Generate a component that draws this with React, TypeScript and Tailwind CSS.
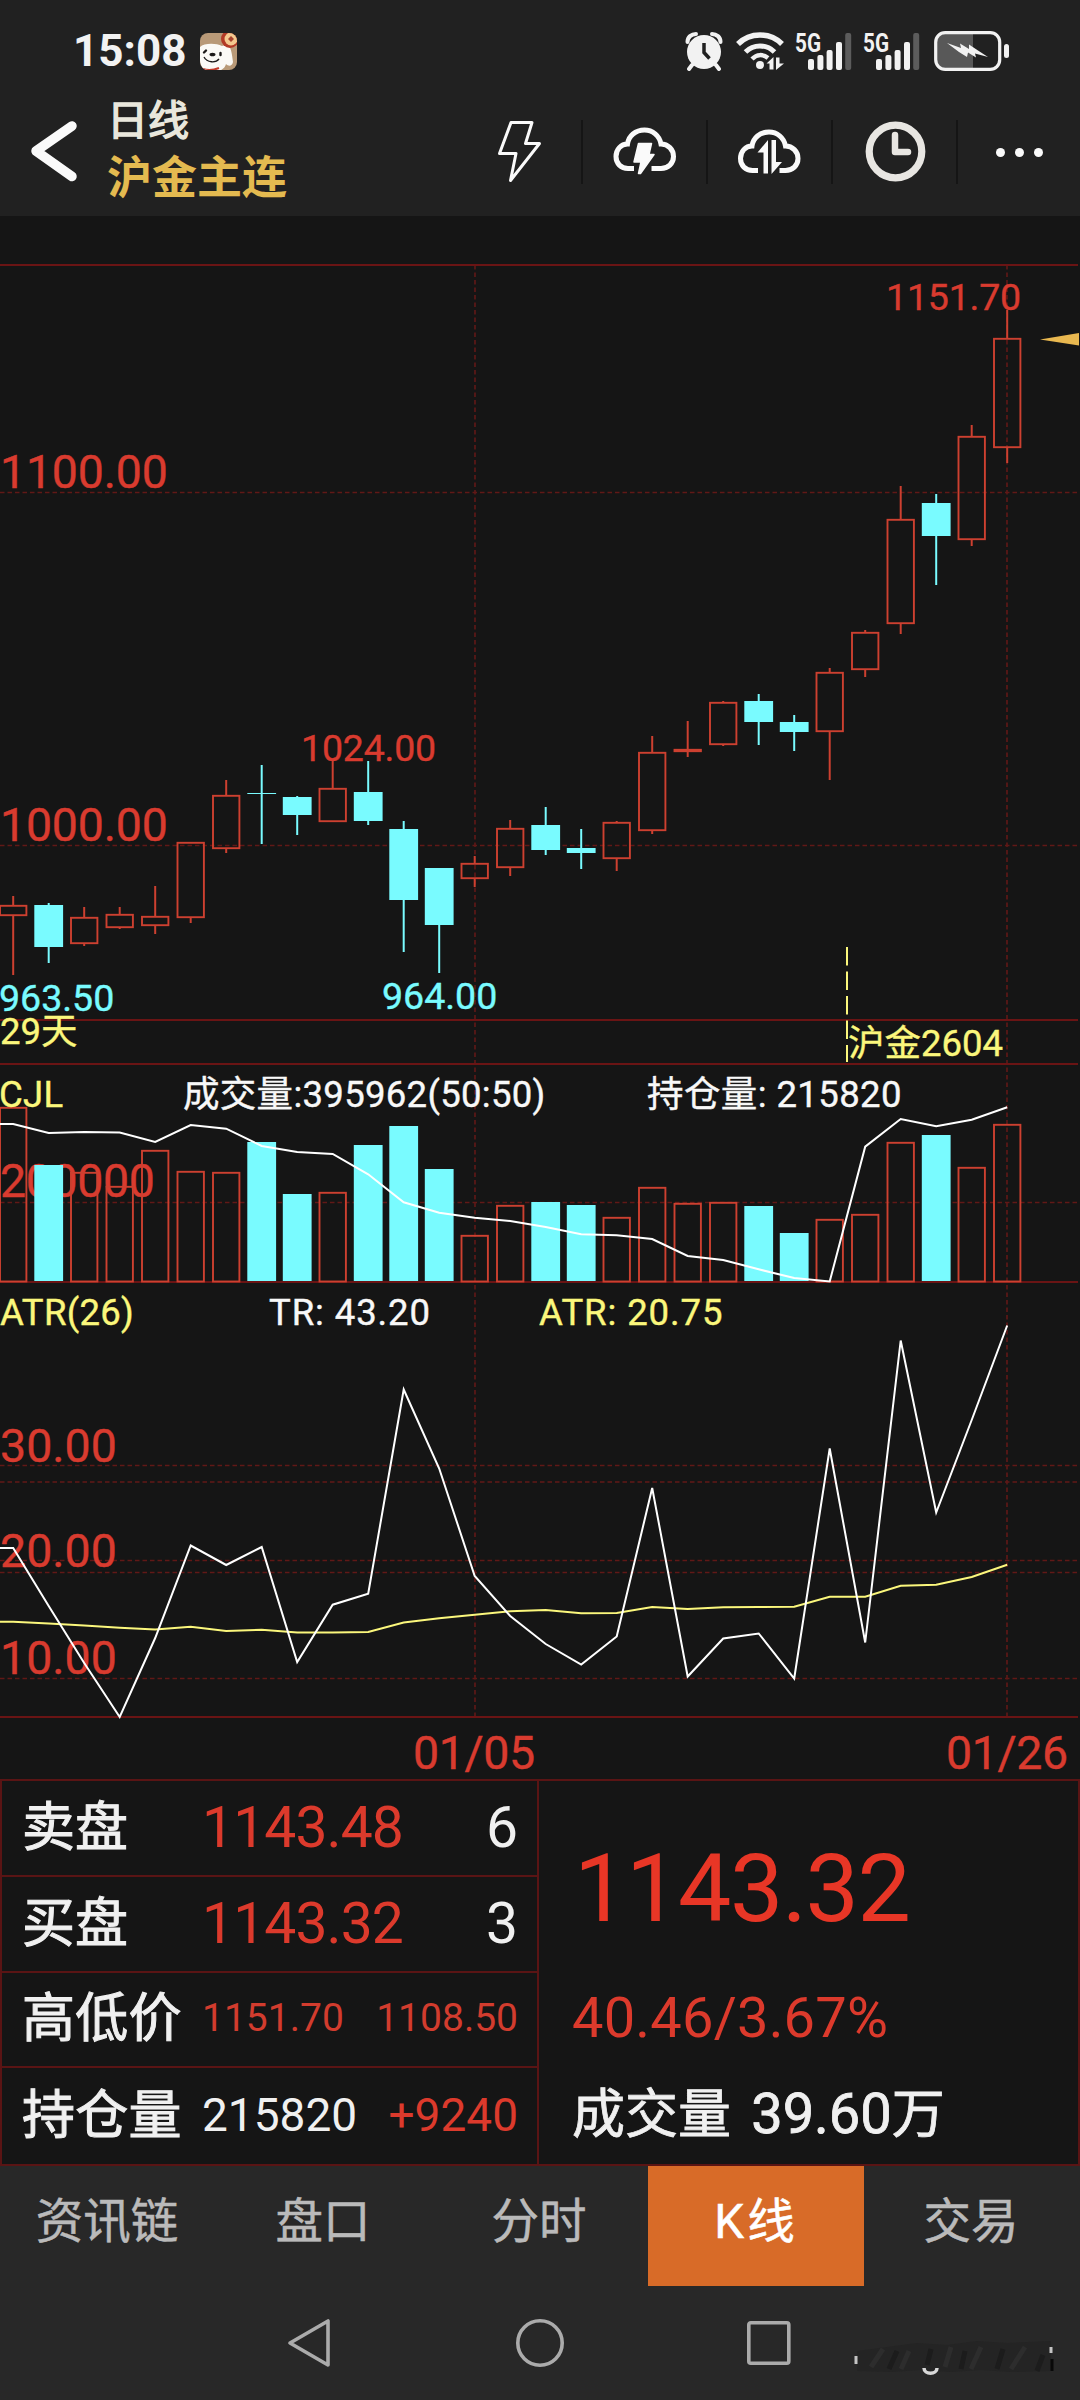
import React from 'react';

type Candle = {
  up: boolean;
  high: number;
  top: number;
  bottom: number;
  low: number;
  volume: number;
};

const RED = '#cd4030';
const LABEL_RED = '#d93b2f';
const CYAN = '#79fbff';
const YELLOW = '#fbf77c';
const GRID = '#611817';
const BORDER = '#6a1414';

const STEP = 35.5;
const BODY = 28;
const BASELINE = 1281.5;

const centerOf = (i: number) => 13.2 + i * STEP;

const candles: Candle[] = [
  { up: true, high: 896, top: 905, bottom: 916, low: 975, volume: 1107 },
  { up: false, high: 903, top: 905, bottom: 947, low: 963, volume: 1165 },
  { up: true, high: 907, top: 917, bottom: 944, low: 946, volume: 1172 },
  { up: true, high: 907, top: 914, bottom: 928, low: 929, volume: 1186 },
  { up: true, high: 886, top: 916, bottom: 926, low: 934, volume: 1150 },
  { up: true, high: 842, top: 842, bottom: 918, low: 923, volume: 1171 },
  { up: true, high: 780, top: 795, bottom: 849, low: 853, volume: 1172 },
  { up: false, high: 765, top: 793, bottom: 794, low: 844, volume: 1142 },
  { up: false, high: 796, top: 797, bottom: 815, low: 835, volume: 1194 },
  { up: true, high: 761, top: 788, bottom: 822, low: 822, volume: 1192 },
  { up: false, high: 761, top: 792, bottom: 821, low: 825, volume: 1145 },
  { up: false, high: 821, top: 829, bottom: 900, low: 952, volume: 1126 },
  { up: false, high: 868, top: 868, bottom: 925, low: 973, volume: 1169 },
  { up: true, high: 856, top: 863, bottom: 879, low: 887, volume: 1235 },
  { up: true, high: 820, top: 828, bottom: 868, low: 876, volume: 1205 },
  { up: false, high: 807, top: 825, bottom: 850, low: 855, volume: 1202 },
  { up: false, high: 829, top: 848, bottom: 853, low: 869, volume: 1205 },
  { up: true, high: 821, top: 822, bottom: 859, low: 871, volume: 1217 },
  { up: true, high: 736, top: 752, bottom: 831, low: 834, volume: 1187 },
  { up: true, high: 721, top: 749, bottom: 752, low: 757, volume: 1203 },
  { up: true, high: 701, top: 702, bottom: 745, low: 746, volume: 1202 },
  { up: false, high: 694, top: 701, bottom: 722, low: 745, volume: 1206 },
  { up: false, high: 715, top: 722, bottom: 732, low: 751, volume: 1233 },
  { up: true, high: 668, top: 672, bottom: 732, low: 780, volume: 1219 },
  { up: true, high: 630, top: 632, bottom: 670, low: 677, volume: 1214 },
  { up: true, high: 486, top: 519, bottom: 624, low: 634, volume: 1142 },
  { up: false, high: 494, top: 503, bottom: 536, low: 585, volume: 1135 },
  { up: true, high: 425, top: 436, bottom: 540, low: 546, volume: 1167 },
  { up: true, high: 310, top: 338, bottom: 448, low: 463, volume: 1124 },
];

const openInterest = [
  1124, 1133, 1132, 1132.5, 1142, 1125, 1128.7, 1146, 1152, 1154, 1174.3, 1202.3, 1212.7, 1217.7, 1221,
  1227, 1234.3, 1235.3, 1239, 1256, 1260, 1269.3, 1278, 1281.5, 1146.7, 1119, 1126.3, 1119.7, 1107.3,
];

const trueRange = [
  1548, 1606, 1663, 1717, 1638, 1545.5, 1565, 1547, 1662, 1604.7, 1593.7, 1389.5, 1468.5, 1576, 1616,
  1644, 1664.5, 1636.5, 1488, 1676.5, 1638.5, 1633.5, 1678.5, 1448.5, 1642.5, 1340.5, 1512.5, 1420, 1325.5,
];

const averageRange = [
  1621.7, 1623.5, 1625.5, 1627.7, 1629.5, 1626.7, 1631, 1629.7, 1632.5, 1632.5, 1632, 1622.5, 1618.3, 1614.7,
  1611.3, 1610, 1613.3, 1613, 1607, 1609, 1607.3, 1607, 1606.7, 1596.7, 1596.7, 1585.7, 1584.7, 1577, 1564.7,
];

const toPoints = (values: number[]) =>
  [`0,${values[0]}`, ...values.map((y, i) => `${centerOf(i)},${y}`)].join(' ');

const tabs = ['资讯链', '盘口', '分时', 'K线', '交易'];

function SignalIcon() {
  return (
    <svg className="-mt-[6px]" width="57" height="46" viewBox="0 -6 57 46">
      <text x="0" y="20.500" fontSize="26" fontWeight="700" textLength="26" lengthAdjust="spacingAndGlyphs" fill="#f2f2f2">
        5G
      </text>
      <rect x="13" y="28" width="6" height="11" rx="2" fill="#f2f2f2" />
      <rect x="22.400" y="24" width="6" height="15" rx="2" fill="#f2f2f2" />
      <rect x="31.600" y="19" width="6" height="20" rx="2" fill="#f2f2f2" />
      <rect x="41" y="11" width="6" height="28" rx="2" fill="#f2f2f2" />
      <rect x="50.200" y="2" width="6" height="37" rx="2" fill="#5c5c5c" />
    </svg>
  );
}

function StatusBar() {
  return (
    <div className="flex h-[84px] items-start pt-[31px] pl-[73px] text-[#f2f2f2]">
      <span className="text-[44px] leading-[40px] font-bold">15:08</span>
      <svg className="mt-[2px] ml-[14px] shrink-0" width="38" height="38" viewBox="0 0 38 38">
        <clipPath id="appIcon">
          <rect x="0" y="0" width="37" height="37" rx="8" />
        </clipPath>
        <g clipPath="url(#appIcon)">
          <rect width="38" height="38" fill="#b99a78" />
          <path d="M0 14c4-4 16-4 22-1l5-2c4 2 5 10 6 18-1 5-5 4-7 2-1 5-7 8-13 8-8 0-13-5-13-12z" fill="#fbfaf6" />
          <circle cx="30" cy="6" r="9" fill="#b23a26" />
          <circle cx="31" cy="6" r="6.500" fill="#f4c98f" />
          <path d="M31 3l3 3-3 3-3-3z" fill="#a8432c" />
          <path d="M3 36c6 2 11 1 16-1" stroke="#c33b2b" strokeWidth="2" fill="none" />
          <ellipse cx="12.500" cy="21.500" rx="3" ry="1.800" fill="#1c1a19" />
          <path d="M4 19.500l2-2M20.500 22v-2" stroke="#1c1a19" strokeWidth="2.400" strokeLinecap="round" />
          <path d="M4 24c3 6 12 6 15 2" stroke="#1c1a19" strokeWidth="1.300" fill="none" />
        </g>
      </svg>
      <div className="ml-[447px] flex h-[40px] items-start">
        {/* alarm */}
        <svg width="38" height="40" viewBox="0 0 38 40">
          <circle cx="19" cy="21" r="17" fill="#f2f2f2" />
          <path d="M2.500 11c0-5 4-8 8.500-8M35.500 11c0-5-4-8-8.500-8" stroke="#f2f2f2" strokeWidth="4" fill="none" strokeLinecap="round" />
          <path d="M7 34l-3 4M31 34l3 4" stroke="#f2f2f2" strokeWidth="4" strokeLinecap="round" />
          <path d="M19 12v9.500l5.500 6" stroke="#212121" strokeWidth="3.500" fill="none" />
        </svg>
        {/* wifi */}
        <svg className="ml-[13px]" width="50" height="40" viewBox="0 0 50 40">
          <g stroke="#f2f2f2" fill="none" strokeLinecap="butt">
            <path d="M2 13c12-12 32-12 44 0" strokeWidth="5.500" />
            <path d="M9.500 21c8-8 21-8 29 0" strokeWidth="5" />
            <path d="M16 28c5-5 11-5 16-1" strokeWidth="4.500" />
          </g>
          <circle cx="24" cy="34" r="4" fill="#f2f2f2" />
          <path d="M37.500 38.500h-4v-6h-3l7-6.500zM40 26.500h3.500v6h4.500l-8 6.500z" fill="#f2f2f2" />
        </svg>
        <div className="ml-[9px] flex items-start gap-[11px]">
          <SignalIcon />
          <SignalIcon />
        </div>
        {/* battery */}
        <svg className="ml-[14px]" width="77" height="40" viewBox="0 0 77 40">
          <path d="M10 3h29v34H10a7 7 0 0 1-7-7V10a7 7 0 0 1 7-7z" fill="#585858" />
          <rect x="1.700" y="1.700" width="64" height="36.600" rx="9.500" stroke="#f2f2f2" strokeWidth="3.200" fill="none" />
          <path d="M13 12l14 5-1-4.500 9 5.500 0-4.500 9 6 10 6.500-13-3.500 1 4-8-5-1 4.500-8-5z" fill="#f2f2f2" />
          <rect x="70" y="13" width="5" height="14" rx="2.500" fill="#f2f2f2" />
        </svg>
      </div>
    </div>
  );
}

function TitleBar() {
  return (
    <div className="flex h-[132px]">
      <svg className="mt-[34px] ml-[28px]" width="52" height="66" viewBox="28 118 52 66">
        <path d="M72 126L36 151l36 25.500" stroke="#fafafa" strokeWidth="9.500" strokeLinecap="round" strokeLinejoin="round" fill="none" />
      </svg>
      <div className="ml-[27px] flex w-[350px] flex-col pt-[15px] whitespace-nowrap">
        <span className="text-[41px] leading-[44px] text-[#e9e7dc] [-webkit-text-stroke:1.5px]">日线</span>
        <span className="mt-[11px] text-[45px] leading-[50px] font-bold text-[#e4ba50]">沪金主连</span>
      </div>
      <div className="mt-[36px] flex h-[64px]">
        <div className="w-[126px] border-r-2 border-[#151515]">
          <svg className="ml-[36px]" width="50" height="64" viewBox="494 120 50 64">
            <path d="M512 122.500h21l-6.500 21h14l-29 37 5.500-27h-16.500z" stroke="#fafafa" strokeWidth="3" strokeLinejoin="round" fill="none" />
          </svg>
        </div>
        <div className="w-[125px] border-r-2 border-[#151515]">
          <svg className="ml-[26px]" width="70" height="64" viewBox="609 120 70 64">
            <path
              d="M634 168.500h-6c-7 0-12-5-12-12s5-12.500 11.500-12.500c1-8 8-14 17-14 8 0 15 5.500 16.500 14 7 0 12.500 5.500 12.500 12.500s-5.500 12-12.500 12h-9.500"
              stroke="#fafafa"
              strokeWidth="5"
              fill="none"
            />
            <path d="M638.500 143.500h13l-2.500 11h5l-13.500 19h-2l2.500-11.500h-7z" fill="#fafafa" stroke="#fafafa" strokeWidth="1.500" strokeLinejoin="round" />
          </svg>
        </div>
        <div className="w-[125px] border-r-2 border-[#151515]">
          <svg className="ml-[26px]" width="70" height="64" viewBox="734 120 70 64">
            <path
              d="M758 170.500h-5.500c-7 0-12-5-12-12s5-12.500 11.500-12.500c1-8 8-14 17-14 8 0 15 5.500 16.500 14 7 0 12.500 5.500 12.500 12.500s-5.500 12-12.500 12h-6"
              stroke="#fafafa"
              strokeWidth="5"
              fill="none"
            />
            <path d="M768 140v33.500h-4.500v-21h-6zM771.500 140h4.500v22h6l-10.500 12z" fill="#fafafa" />
          </svg>
        </div>
        <div className="w-[125px] border-r-2 border-[#151515]">
          <svg className="ml-[30px]" width="66" height="64" viewBox="863 120 66 64">
            <circle cx="895.500" cy="151.500" r="26.300" stroke="#e8e6e2" strokeWidth="7.200" fill="none" />
            <path d="M895 135v17h13" stroke="#e8e6e2" strokeWidth="6.500" strokeLinecap="round" strokeLinejoin="round" fill="none" />
          </svg>
        </div>
        <div className="flex items-center gap-[10px] pl-[38px]">
          <span className="size-[9px] rounded-full bg-[#fafafa]" />
          <span className="size-[9px] rounded-full bg-[#fafafa]" />
          <span className="size-[9px] rounded-full bg-[#fafafa]" />
        </div>
      </div>
    </div>
  );
}

interface LabelProps {
  x: number;
  y: number;
  size?: number;
  fill?: string;
  spacing?: number;
  children: React.ReactNode;
}

function Label({ x, y, size = 37, fill = LABEL_RED, spacing = 0, children }: LabelProps) {
  return (
    <text x={x} y={y} fontSize={size} fill={fill} letterSpacing={spacing} stroke={fill} strokeWidth="0.400">
      {children}
    </text>
  );
}

function Chart() {
  return (
    <svg className="block" width="1080" height="1563" viewBox="0 216 1080 1563">
      {/* grid */}
      <g stroke={GRID} strokeWidth="1.600" strokeDasharray="4.500 3">
        {[492.5, 845.5, 1202.5, 1465.5, 1482, 1560.5, 1572.5, 1678.5].map((y) => (
          <line key={y} x1="0" x2="1080" y1={y} y2={y} />
        ))}
        <line x1="475" x2="475" y1="265" y2="1717" />
        <line x1="1007" x2="1007" y1="265" y2="1717" />
      </g>
      <g stroke={BORDER} strokeWidth="2">
        {[265, 1020, 1064, 1282, 1717].map((y) => (
          <line key={y} x1="0" x2="1078" y1={y} y2={y} />
        ))}
      </g>

      {/* axis labels sit under the bars */}
      <Label x={0} y={488} size={46.500} spacing={-0.2}>1100.00</Label>
      <Label x={0} y={841} size={46.500} spacing={-0.2}>1000.00</Label>
      <Label x={0} y={1197} size={46.500} spacing={-0.4}>200000</Label>
      <Label x={0} y={1462} size={46.500}>30.00</Label>
      <Label x={0} y={1567} size={46.500}>20.00</Label>
      <Label x={0} y={1674} size={46.500}>10.00</Label>
      <Label x={413} y={1769} size={46.500} spacing={-0.4}>01/05</Label>
      <Label x={946} y={1769} size={46.500} spacing={-0.4}>01/26</Label>

      <Label x={886} y={309.500} size={37.500} spacing={-0.2}>1151.70</Label>
      <Label x={301} y={760.500} size={37.500} spacing={-0.2}>1024.00</Label>
      <Label x={-1} y={1010.500} size={37.500} fill={CYAN}>963.50</Label>
      <Label x={382} y={1009} size={37.500} fill={CYAN}>964.00</Label>
      <Label x={0} y={1043.500} size={36.500} fill={YELLOW}>29天</Label>

      {candles.map((c, i) => {
        const x = centerOf(i);
        const left = x - BODY / 2;
        return (
          <g key={i}>
            <line x1={x} x2={x} y1={c.high} y2={c.top} stroke={c.up ? RED : CYAN} strokeWidth="2" />
            <line x1={x} x2={x} y1={c.bottom} y2={c.low} stroke={c.up ? RED : CYAN} strokeWidth="2" />
            {c.up ? (
              <>
                <rect x={left + 0.8} y={c.top + 0.8} width={BODY - 1.6} height={c.bottom - c.top - 1.6} stroke={RED} strokeWidth="1.900" fill="none" />
                <rect x={left + 0.8} y={c.volume + 0.8} width={BODY - 1.6} height={BASELINE - c.volume - 0.8} stroke={RED} strokeWidth="1.900" fill="none" />
              </>
            ) : (
              <>
                <rect x={left - 0.4} y={c.top} width={BODY + 0.8} height={c.bottom - c.top} fill={CYAN} />
                <rect x={left - 0.4} y={c.volume} width={BODY + 0.8} height={BASELINE - c.volume - 0.5} fill={CYAN} />
              </>
            )}
          </g>
        );
      })}

      {/* last price marker */}
      <path d="M1040 339.500L1079 333v12.500z" fill="#e9b850" />

      {/* contract rollover */}
      <line x1="847" x2="847" y1="947" y2="1062" stroke={YELLOW} strokeWidth="2" strokeDasharray="18.500 6" />
      <Label x={848} y={1056} size={36.500} fill={YELLOW}>沪金2604</Label>

      <Label x={-1} y={1106.500} size={36.500} fill={YELLOW} spacing={0.3}>CJL</Label>
      <Label x={183} y={1106.500} size={36.500} fill="#f8f8f8" spacing={0.3}>成交量:395962(50:50)</Label>
      <Label x={647} y={1106.500} size={36.500} fill="#f8f8f8" spacing={0.4}>持仓量: 215820</Label>
      <Label x={0} y={1324.500} size={36.500} fill={YELLOW} spacing={0.3}>ATR(26)</Label>
      <Label x={269} y={1324.500} size={36.500} fill="#f8f8f8" spacing={0.9}>TR: 43.20</Label>
      <Label x={539} y={1324.500} size={36.500} fill={YELLOW} spacing={0.9}>ATR: 20.75</Label>

      <g fill="none" strokeWidth="2">
        <polyline points={toPoints(openInterest)} stroke="#ffffff" />
        <polyline points={toPoints(averageRange)} stroke={YELLOW} />
        <polyline points={toPoints(trueRange)} stroke="#ffffff" />
      </g>
    </svg>
  );
}

function QuotePanel() {
  return (
    <div className="flex h-[387px] border-2 border-[#5a1414] whitespace-nowrap text-[#f0f0f0]">
      <div className="grid w-[537px] grid-rows-4 divide-y-2 divide-[#5a1414] border-r-2 border-[#5a1414]">
        <div className="flex items-center pr-[19px] pl-[20px]">
          <span className="w-[180px] text-[53px] leading-[60px] [-webkit-text-stroke:1px]">卖盘</span>
          <span className="text-[57px] leading-[60px] tracking-[-0.9px] text-[#dc3a2c]">1143.48</span>
          <span className="ml-auto text-[57px] leading-[60px]">6</span>
        </div>
        <div className="flex items-center pr-[19px] pl-[20px]">
          <span className="w-[180px] text-[53px] leading-[60px] [-webkit-text-stroke:1px]">买盘</span>
          <span className="text-[57px] leading-[60px] tracking-[-0.9px] text-[#dc3a2c]">1143.32</span>
          <span className="ml-auto text-[57px] leading-[60px]">3</span>
        </div>
        <div className="flex items-center pr-[19px] pl-[20px]">
          <span className="w-[180px] text-[53px] leading-[60px] tracking-[0.3px] [-webkit-text-stroke:1px]">高低价</span>
          <span className="mb-[3px] text-[39px] leading-[60px] text-[#d23c2e]">1151.70</span>
          <span className="mb-[3px] ml-auto text-[39px] leading-[60px] text-[#d23c2e]">1108.50</span>
        </div>
        <div className="flex items-center pr-[19px] pl-[20px]">
          <span className="w-[180px] text-[53px] leading-[60px] tracking-[0.3px] [-webkit-text-stroke:1px]">持仓量</span>
          <span className="mb-[3px] text-[46px] leading-[60px]">215820</span>
          <span className="mb-[3px] ml-auto text-[46px] leading-[60px] text-[#dc3a2c]">+9240</span>
        </div>
      </div>
      <div className="flex flex-1 flex-col pl-[33px]">
        <span className="mt-[58px] pl-[2px] text-[95px] leading-[100px] tracking-[-1.4px] text-[#e83626]">1143.32</span>
        <span className="mt-[49px] text-[56px] leading-[60px] tracking-[0.2px] text-[#dc3a2c]">40.46/3.67%</span>
        <span className="mt-[36px] text-[53px] leading-[60px] [-webkit-text-stroke:0.8px]">
          成交量 <span className="pl-[7px] text-[56px]">39.60</span>万
        </span>
      </div>
    </div>
  );
}

function BottomTabs() {
  return (
    <div className="grid h-[120px] grid-cols-5">
      {tabs.map((tab) => (
        <div
          key={tab}
          className={`flex items-center justify-center pb-[8px] text-[47.5px] leading-[60px] [-webkit-text-stroke:0.5px] ${
            tab === 'K线' ? 'bg-[#d86b28] tracking-[3px] text-white' : 'pr-[2px] text-[#bababa]'
          }`}
        >
          {tab}
        </div>
      ))}
    </div>
  );
}

function SystemNav() {
  return (
    <div className="flex h-[114px] pt-[31px] pl-[285px]">
      <svg width="46" height="52" viewBox="0 0 46 52">
        <path d="M43 4v44L5 26z" stroke="#ababab" strokeWidth="3.600" strokeLinejoin="round" fill="none" />
      </svg>
      <svg className="ml-[183px]" width="52" height="52" viewBox="0 0 52 52">
        <circle cx="26" cy="26" r="22.200" stroke="#ababab" strokeWidth="3.600" fill="none" />
      </svg>
      <svg className="ml-[179px]" width="48" height="52" viewBox="0 0 48 52">
        <rect x="3.800" y="5.800" width="40" height="40.400" rx="2" stroke="#ababab" strokeWidth="3.600" fill="none" />
      </svg>
      {/* smudge left behind in the corner */}
      <svg className="mt-[22px] ml-[60px]" width="206" height="38" viewBox="0 0 206 38">
        <path d="M4 12l30-4 30-4 30 2 30-4 30 2 44-2v30l-40 1-30-2-30 2-30-2-30 2-34-1z" fill="#242424" />
        <path d="M18 28l12-18M48 30l8-18M92 28l6-20M118 30l10-22M158 30l14-22" stroke="#2d2d2d" strokeWidth="5" />
        <path d="M36 30l8-18M74 26l4-16M108 30l4-18M144 30l6-20M184 32l6-16" stroke="#1c1c1c" strokeWidth="5" />
        <path d="M3 17v8M198 8v6" stroke="#c4c4c4" strokeWidth="3" />
        <path d="M71 29c0 7 13 7 13 0" stroke="#d8d8d8" strokeWidth="3.500" fill="none" />
        <path d="M199 20v12" stroke="#090909" strokeWidth="3" />
      </svg>
    </div>
  );
}

export default function App() {
  return (
    <div className="h-[2400px] w-[1080px] overflow-hidden bg-[#151515] font-['Roboto','Noto_Sans_CJK_SC',sans-serif]">
      <div className="bg-[#212121]">
        <StatusBar />
        <TitleBar />
      </div>
      <Chart />
      <QuotePanel />
      <div className="bg-[#282828]">
        <BottomTabs />
        <SystemNav />
      </div>
    </div>
  );
}
